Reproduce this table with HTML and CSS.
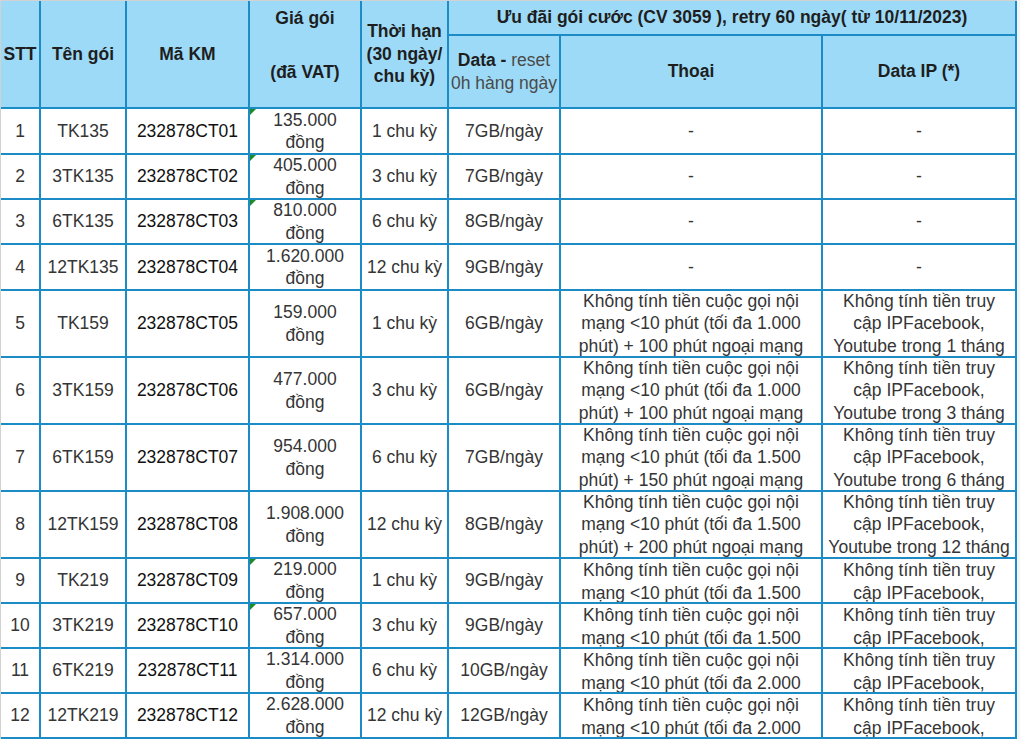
FILE: index.html
```html
<!DOCTYPE html>
<html lang="vi">
<head>
<meta charset="utf-8">
<title>Ưu đãi gói cước</title>
<link rel="stylesheet" href="styles.css">
</head>
<body>
<div class="sheet">
  <div class="cell hd c-stt">STT</div>
  <div class="cell hd c-ten">Tên gói</div>
  <div class="cell hd c-ma">Mã KM</div>
  <div class="cell hd c-gia"><span>Giá gói</span><span class="vat">(đã VAT)</span></div>
  <div class="cell hd c-han">Thời hạn<br>(30 ngày/<br>chu kỳ)</div>
  <div class="cell hd c-uu">Ưu đãi gói cước (CV 3059 ), retry 60 ngày( từ 10/11/2023)</div>
  <div class="cell hd c-data"><span>Data - <span class="thin">reset<br>0h hàng ngày</span></span></div>
  <div class="cell hd c-thoai">Thoại</div>
  <div class="cell hd c-ip">Data IP (*)</div>

  <div class="cell">1</div><div class="cell">TK135</div><div class="cell ma">232878CT01</div><div class="cell tri">135.000<br>đồng</div><div class="cell">1 chu kỳ</div><div class="cell">7GB/ngày</div><div class="cell">-</div><div class="cell">-</div>
  <div class="cell">2</div><div class="cell">3TK135</div><div class="cell ma">232878CT02</div><div class="cell tri">405.000<br>đồng</div><div class="cell">3 chu kỳ</div><div class="cell">7GB/ngày</div><div class="cell">-</div><div class="cell">-</div>
  <div class="cell">3</div><div class="cell">6TK135</div><div class="cell ma">232878CT03</div><div class="cell tri">810.000<br>đồng</div><div class="cell">6 chu kỳ</div><div class="cell">8GB/ngày</div><div class="cell">-</div><div class="cell">-</div>
  <div class="cell">4</div><div class="cell">12TK135</div><div class="cell ma">232878CT04</div><div class="cell">1.620.000<br>đồng</div><div class="cell">12 chu kỳ</div><div class="cell">9GB/ngày</div><div class="cell">-</div><div class="cell">-</div>

  <div class="cell">5</div><div class="cell">TK159</div><div class="cell ma">232878CT05</div><div class="cell">159.000<br>đồng</div><div class="cell">1 chu kỳ</div><div class="cell">6GB/ngày</div><div class="cell">Không tính tiền cuộc gọi nội<br>mạng &lt;10 phút (tối đa 1.000<br>phút) + 100 phút ngoại mạng</div><div class="cell">Không tính tiền truy<br>cập IPFacebook,<br>Youtube trong 1 tháng</div>
  <div class="cell">6</div><div class="cell">3TK159</div><div class="cell ma">232878CT06</div><div class="cell">477.000<br>đồng</div><div class="cell">3 chu kỳ</div><div class="cell">6GB/ngày</div><div class="cell">Không tính tiền cuộc gọi nội<br>mạng &lt;10 phút (tối đa 1.000<br>phút) + 100 phút ngoại mạng</div><div class="cell">Không tính tiền truy<br>cập IPFacebook,<br>Youtube trong 3 tháng</div>
  <div class="cell">7</div><div class="cell">6TK159</div><div class="cell ma">232878CT07</div><div class="cell">954.000<br>đồng</div><div class="cell">6 chu kỳ</div><div class="cell">7GB/ngày</div><div class="cell">Không tính tiền cuộc gọi nội<br>mạng &lt;10 phút (tối đa 1.500<br>phút) + 150 phút ngoại mạng</div><div class="cell">Không tính tiền truy<br>cập IPFacebook,<br>Youtube trong 6 tháng</div>
  <div class="cell">8</div><div class="cell">12TK159</div><div class="cell ma">232878CT08</div><div class="cell">1.908.000<br>đồng</div><div class="cell">12 chu kỳ</div><div class="cell">8GB/ngày</div><div class="cell">Không tính tiền cuộc gọi nội<br>mạng &lt;10 phút (tối đa 1.500<br>phút) + 200 phút ngoại mạng</div><div class="cell">Không tính tiền truy<br>cập IPFacebook,<br>Youtube trong 12 tháng</div>

  <div class="cell">9</div><div class="cell">TK219</div><div class="cell ma">232878CT09</div><div class="cell tri">219.000<br>đồng</div><div class="cell">1 chu kỳ</div><div class="cell">9GB/ngày</div><div class="cell clip">Không tính tiền cuộc gọi nội<br>mạng &lt;10 phút (tối đa 1.500</div><div class="cell clip">Không tính tiền truy<br>cập IPFacebook,</div>
  <div class="cell">10</div><div class="cell">3TK219</div><div class="cell ma">232878CT10</div><div class="cell tri">657.000<br>đồng</div><div class="cell">3 chu kỳ</div><div class="cell">9GB/ngày</div><div class="cell clip">Không tính tiền cuộc gọi nội<br>mạng &lt;10 phút (tối đa 1.500</div><div class="cell clip">Không tính tiền truy<br>cập IPFacebook,</div>
  <div class="cell">11</div><div class="cell">6TK219</div><div class="cell ma">232878CT11</div><div class="cell">1.314.000<br>đồng</div><div class="cell">6 chu kỳ</div><div class="cell">10GB/ngày</div><div class="cell clip">Không tính tiền cuộc gọi nội<br>mạng &lt;10 phút (tối đa 2.000</div><div class="cell clip">Không tính tiền truy<br>cập IPFacebook,</div>
  <div class="cell">12</div><div class="cell">12TK219</div><div class="cell ma">232878CT12</div><div class="cell">2.628.000<br>đồng</div><div class="cell">12 chu kỳ</div><div class="cell">12GB/ngày</div><div class="cell clip">Không tính tiền cuộc gọi nội<br>mạng &lt;10 phút (tối đa 2.000</div><div class="cell clip">Không tính tiền truy<br>cập IPFacebook,</div>
</div>
</body>
</html>
```

FILE: styles.css
```css
html, body {
  margin: 0;
  padding: 0;
  background: #f4f4f4;
}

.sheet {
  display: grid;
  width: fit-content;
  grid-template-columns: 38px 84px 121px 110px 85px 110px 260px 192px;
  grid-template-rows: 33px 71px 44px 43px 43px 44px 65px 65px 65px 65px 43px 43px 43px 43px;
  gap: 2px;
  padding: 0 2px 2px 0;
  background: #1b8cc6;
  border-left: 1px solid #d2d2d2;
  border-top: 1px solid #d2d2d2;
  font-family: "Liberation Sans", Arial, sans-serif;
  font-size: 17.5px;
  line-height: 22.5px;
  color: #353535;
}

.cell {
  position: relative;
  display: flex;
  align-items: center;
  justify-content: center;
  text-align: center;
  overflow: hidden;
  background: #ffffff;
  white-space: nowrap;
}

.hd {
  background: #9ddaf7;
  font-weight: bold;
  color: #1e1e1e;
}

.c-stt { grid-column: 1; grid-row: 1 / 3; }
.c-ten { grid-column: 2; grid-row: 1 / 3; }
.c-ma { grid-column: 3; grid-row: 1 / 3; }
.c-gia {
  grid-column: 4;
  grid-row: 1 / 3;
  flex-direction: column;
  justify-content: flex-start;
  padding-top: 6px;
}
.c-gia .vat { margin-top: 31px; }
.c-han { grid-column: 5; grid-row: 1 / 3; }
.c-uu { grid-column: 6 / 9; grid-row: 1; }
.c-data { grid-column: 6; grid-row: 2; }
.c-thoai { grid-column: 7; grid-row: 2; }
.c-ip { grid-column: 8; grid-row: 2; }

.thin {
  font-weight: normal;
  color: #4a4a4a;
}

.ma {
  color: #111111;
}

.clip {
  align-items: flex-start;
}

.tri::before {
  content: "";
  position: absolute;
  top: 0;
  left: 0;
  border-top: 6px solid #1f8a2a;
  border-right: 6px solid transparent;
}
```
